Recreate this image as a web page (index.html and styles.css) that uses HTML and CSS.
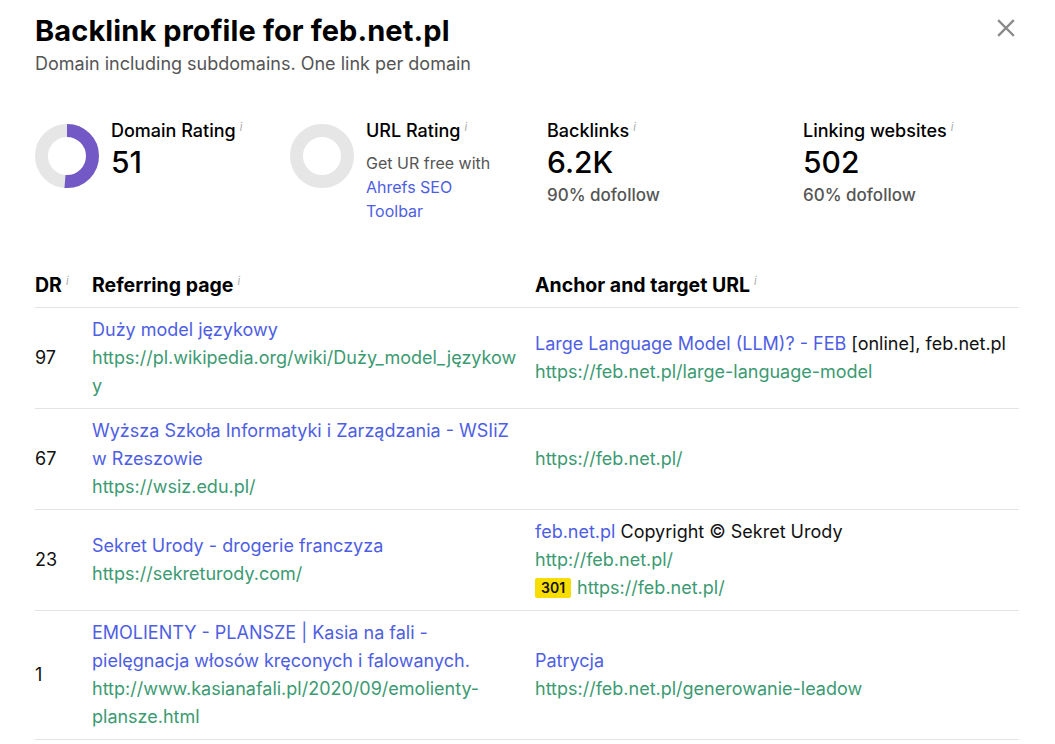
FILE: index.html
```html
<!DOCTYPE html>
<html lang="en">
<head>
  <meta charset="UTF-8" />
  <meta name="viewport" content="width=device-width, initial-scale=1.0"/>
  <title>Backlink profile</title>
  <link rel="stylesheet" href="styles.css">
</head>
<body>
  <div class="modal">
    <div class="header">
      <div>
        <h1>Backlink profile for feb.net.pl</h1>
        <p class="subtitle">Domain including subdomains. One link per domain</p>
      </div>
      <button class="close" aria-label="Close">
        <svg width="18" height="18" viewBox="0 0 18 18"><path d="M2 2 L16 16 M16 2 L2 16" stroke="#8a8a8a" stroke-width="2.4" stroke-linecap="square"/></svg>
      </button>
    </div>

    <div class="stats">
      <div class="stat">
        <svg class="donut" width="64" height="64" viewBox="0 0 64 64">
          <circle cx="32" cy="32" r="25.5" fill="none" stroke="#e6e6e6" stroke-width="13"/>
          <circle cx="32" cy="32" r="25.5" fill="none" stroke="#7359c5" stroke-width="13"
            stroke-dasharray="81.7 200" transform="rotate(-90 32 32)"/>
        </svg>
        <div>
          <div class="stat-label">Domain Rating<sup>i</sup></div>
          <div class="stat-value">51</div>
        </div>
      </div>
      <div class="stat">
        <svg class="donut" width="64" height="64" viewBox="0 0 64 64">
          <circle cx="32" cy="32" r="25.5" fill="none" stroke="#e6e6e6" stroke-width="13"/>
        </svg>
        <div>
          <div class="stat-label">URL Rating<sup>i</sup></div>
          <p class="stat-note">Get UR free with <a href="#">Ahrefs SEO Toolbar</a></p>
        </div>
      </div>
      <div class="stat">
        <div>
          <div class="stat-label">Backlinks<sup>i</sup></div>
          <div class="stat-value">6.2K</div>
          <div class="stat-sub">90% dofollow</div>
        </div>
      </div>
      <div class="stat">
        <div>
          <div class="stat-label">Linking websites<sup>i</sup></div>
          <div class="stat-value">502</div>
          <div class="stat-sub">60% dofollow</div>
        </div>
      </div>
    </div>

    <table class="links">
      <thead>
        <tr>
          <th class="col-dr">DR<sup>i</sup></th>
          <th class="col-ref">Referring page<sup>i</sup></th>
          <th>Anchor and target URL<sup>i</sup></th>
        </tr>
      </thead>
      <tbody>
        <tr>
          <td>97</td>
          <td class="col-ref">
            <a class="title" href="#">Duży model językowy</a>
            <a class="url" href="#">https://pl.wikipedia.org/wiki/Duży_model_językowy</a>
          </td>
          <td>
            <a class="title" href="#">Large Language Model (LLM)? - FEB</a> [online], feb.net.pl
            <a class="url" href="#">https://feb.net.pl/large-language-model</a>
          </td>
        </tr>
        <tr>
          <td>67</td>
          <td class="col-ref">
            <a class="title" href="#">Wyższa Szkoła Informatyki i Zarządzania - WSIiZ w Rzeszowie</a>
            <a class="url" href="#">https://wsiz.edu.pl/</a>
          </td>
          <td>
            <a class="url" href="#">https://feb.net.pl/</a>
          </td>
        </tr>
        <tr>
          <td>23</td>
          <td class="col-ref">
            <a class="title" href="#">Sekret Urody - drogerie franczyza</a>
            <a class="url" href="#">https://sekreturody.com/</a>
          </td>
          <td>
            <a class="title" href="#">feb.net.pl</a> Copyright © Sekret Urody
            <a class="url" href="#">http://feb.net.pl/</a>
            <div class="redirect"><span class="badge">301</span><a class="url inline" href="#">https://feb.net.pl/</a></div>
          </td>
        </tr>
        <tr>
          <td>1</td>
          <td class="col-ref">
            <a class="title" href="#">EMOLIENTY - PLANSZE | Kasia na fali - pielęgnacja włosów kręconych i falowanych.</a>
            <a class="url" href="#">http://www.kasianafali.pl/2020/09/emolienty-plansze.html</a>
          </td>
          <td>
            <a class="title" href="#">Patrycja</a>
            <a class="url" href="#">https://feb.net.pl/generowanie-leadow</a>
          </td>
        </tr>
      </tbody>
    </table>
  </div>
</body>
</html>
```

FILE: styles.css
```css
body {
  margin: 0;
  background: #fff;
  color: #111;
  font-family: Inter, "Noto Sans", sans-serif;
  font-size: 18px;
}

.modal {
  padding: 12px 36px 0 35px;
}

.header {
  display: flex;
  justify-content: space-between;
  align-items: flex-start;
}

h1 {
  margin: 0;
  font-size: 29px;
  line-height: 38px;
  font-weight: 700;
  color: #000;
  letter-spacing: 0.1px;
}

.subtitle {
  margin: 1px 0 0;
  color: #555;
  font-size: 18px;
  line-height: 26px;
}

.close {
  background: none;
  border: none;
  padding: 0;
  margin: 7px 4px 0 0;
  cursor: pointer;
}

.stats {
  display: grid;
  grid-template-columns: 255px 257px 256px 216px;
  margin-top: 42px;
}

.stat {
  display: flex;
  gap: 12px;
  align-items: flex-start;
}

.donut {
  margin-top: 5px;
  flex: none;
}

.stat-label {
  font-size: 18px;
  font-weight: 500;
  line-height: 24px;
  color: #000;
}

sup {
  font-size: 11px;
  color: #aaa;
  font-weight: 400;
  font-style: italic;
  vertical-align: top;
  margin-left: 4px;
  position: relative;
  top: -4px;
}

.stat-value {
  font-size: 30px;
  font-weight: 500;
  line-height: 38px;
  color: #000;
}

.stat-sub {
  color: #555;
  font-size: 17px;
  font-weight: 500;
  line-height: 28px;
}

.stat-note {
  margin: 8px 0 0;
  color: #555;
  font-size: 16px;
  line-height: 24px;
  width: 140px;
}

.stat-note a {
  color: #4e5ee4;
  text-decoration: none;
}

.links {
  width: 984px;
  margin-top: 50px;
  border-collapse: collapse;
  table-layout: fixed;
}

.links th {
  text-align: left;
  font-size: 19.5px;
  font-weight: 700;
  line-height: 24px;
  padding: 0 0 10px;
  border-bottom: 1px solid #e3e3e3;
  color: #000;
}

.links td {
  padding: 8px 0 8px;
  border-bottom: 1px solid #e3e3e3;
  line-height: 28px;
  font-size: 18px;
  vertical-align: middle;
}

.col-dr {
  width: 57px;
}

th.col-ref {
  width: 443px;
}

td.col-ref {
  padding-right: 15px;
}

.links a {
  text-decoration: none;
}

.title {
  color: #4e5ee4;
}

.url {
  display: block;
  color: #3c9a72;
  overflow-wrap: anywhere;
}

.url.inline {
  display: inline;
}

.badge {
  display: inline-block;
  background: #f7dd00;
  color: #111;
  font-size: 14px;
  font-weight: 600;
  line-height: 20px;
  padding: 0 6px;
  border-radius: 2px;
  margin-right: 6px;
  vertical-align: 1px;
}
```
